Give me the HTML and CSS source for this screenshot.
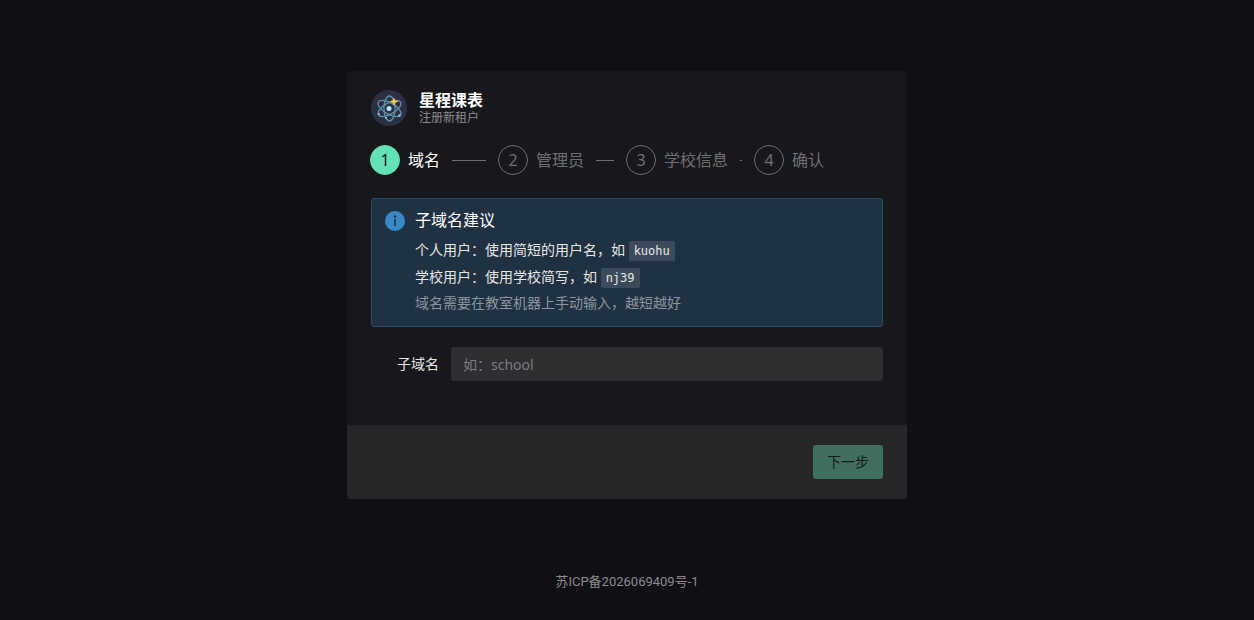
FILE: index.html
```
<!DOCTYPE html>
<html lang="zh-CN">
<head>
	<meta charset="UTF-8">
	<meta name="viewport" content="width=device-width, initial-scale=1.0">
	<title>星程课表 - 注册新租户</title>
	<link rel="stylesheet" href="styles.css">
</head>
<body>
	<main class="page">
		<form class="card">
			<div class="card-body">
				<!-- Logo and title -->
				<header class="brand">
					<svg class="logo" viewBox="0 0 36 36" aria-hidden="true">
						<circle cx="18" cy="18" r="18" fill="#2d3043"/>
						<g fill="none" stroke="#5f93a8" stroke-width="1.3">
							<ellipse cx="18.500" cy="18.500" rx="5.600" ry="12.500"/>
							<ellipse cx="18.500" cy="18.500" rx="5.600" ry="12.800" transform="rotate(60 18.500 18.500)"/>
							<ellipse cx="18.500" cy="18.500" rx="5.600" ry="12.800" transform="rotate(-60 18.500 18.500)"/>
						</g>
						<circle cx="18" cy="18.500" r="2.500" fill="#b5ecff"/>
						<g fill="#8ccbe0">
							<circle cx="8" cy="24" r="1"/>
							<circle cx="28.500" cy="25.500" r="1.200"/>
							<circle cx="15" cy="28" r="0.900"/>
						</g>
						<path d="M23 7.500l1.300 2.700 3.200 1.300-3.200 1.300-1.300 3.200-1.300-3.200-3.200-1.300 3.200-1.300z" fill="#f9c846"/>
					</svg>
					<div>
						<h1>星程课表</h1>
						<p>注册新租户</p>
					</div>
				</header>

				<!-- Registration steps -->
				<ol class="steps">
					<li class="step active"><span class="num">1</span><span class="name">域名</span></li>
					<li class="step"><span class="num">2</span><span class="name">管理员</span></li>
					<li class="step"><span class="num">3</span><span class="name">学校信息</span></li>
					<li class="step"><span class="num">4</span><span class="name">确认</span></li>
				</ol>

				<!-- Domain tips -->
				<section class="tips">
					<svg class="tips-icon" viewBox="0 0 20 20" aria-hidden="true">
						<circle cx="10" cy="10" r="10" fill="#3889c5"/>
						<circle cx="10" cy="5.500" r="1.200" fill="#203242"/>
						<path d="M10 8.500v6" stroke="#203242" stroke-width="1.600" stroke-linecap="round"/>
					</svg>
					<div>
						<h2>子域名建议</h2>
						<p>个人用户：使用简短的用户名，如 <code>kuohu</code></p>
						<p>学校用户：使用学校简写，如 <code>nj39</code></p>
						<p class="note">域名需要在教室机器上手动输入，越短越好</p>
					</div>
				</section>

				<div class="field">
					<label for="subdomain">子域名</label>
					<input type="text" id="subdomain" placeholder="如：school">
				</div>
			</div>
			<div class="card-footer">
				<button type="submit" disabled>下一步</button>
			</div>
		</form>
	</main>
	<footer class="icp"><a href="#">苏ICP备2026069409号-1</a></footer>
</body>
</html>
```
FILE: styles.css
```
* {
	box-sizing: border-box;
}
body {
	margin: 0;
	min-height: 100vh;
	display: flex;
	flex-direction: column;
	background-color: #101014;
	color: #e6e6e6;
	font-family: "Noto Sans", "Noto Sans CJK SC", sans-serif;
	font-size: 14px;
	line-height: 22px;
}
h1, h2, p, ol {
	margin: 0;
	padding: 0;
}
.page {
	flex: 1;
	display: flex;
	align-items: center;
	justify-content: center;
	padding: 24px;
}
/* Card */
.card {
	width: 100%;
	max-width: 560px;
	background-color: #18181c;
	border-radius: 3px;
	overflow: hidden;
}
.card-body {
	padding: 19px 24px 44px;
}
.card-footer {
	display: flex;
	justify-content: flex-end;
	padding: 20px 24px;
	background-color: #262628;
}
.brand {
	display: flex;
	align-items: center;
	gap: 12px;
	margin-bottom: 19px;
}
.logo {
	width: 36px;
	height: 36px;
}
.brand h1 {
	font-size: 16px;
	line-height: 20px;
	font-weight: 700;
	color: #fff;
}
.brand p {
	font-size: 12px;
	line-height: 16px;
	color: #8c8c8e;
}
/* Steps */
.steps {
	display: grid;
	grid-template-columns: repeat(4, 1fr);
	margin: 0 1px 23px -1px;
	list-style: none;
	font-size: 16px;
	color: #6f6f72;
}
.step {
	display: flex;
	align-items: center;
	white-space: nowrap;
}
.num {
	display: flex;
	align-items: center;
	justify-content: center;
	width: 30px;
	height: 30px;
	margin-right: 8px;
	border: 1px solid #6f6f72;
	border-radius: 50%;
}
/* Line to the next step */
.step:not(:last-child)::after {
	content: "";
	flex: 1;
	height: 1px;
	margin: 0 12px;
	background-color: #6f6f72;
}
.step.active {
	color: #fff;
}
.step.active .num {
	background-color: #63e2b7;
	border-color: #63e2b7;
	color: #18181c;
}
/* Tips */
.tips {
	display: flex;
	gap: 10px;
	margin-bottom: 20px;
	padding: 12px 13px 11px;
	background-color: #203242;
	border: 1px solid #27506f;
	border-radius: 3px;
}
.tips-icon {
	flex: none;
	width: 20px;
	height: 20px;
}
.tips h2 {
	margin-bottom: 8px;
	font-size: 16px;
	line-height: 18px;
	font-weight: 400;
	color: #fff;
}
.tips p {
	line-height: 26px;
}
.tips .note {
	line-height: 24px;
	color: #8c959d;
}
.tips code {
	padding: 3px 5px;
	background-color: #3b4b59;
	border-radius: 2px;
	font-family: "DejaVu Sans Mono", monospace;
	font-size: 12px;
}
/* Form */
.field {
	display: flex;
	align-items: center;
}
.field label {
	width: 80px;
	padding-right: 12px;
	text-align: right;
}
.field input {
	flex: 1;
	min-width: 0;
	height: 34px;
	padding: 0 12px;
	background-color: #2f2f32;
	border: none;
	border-radius: 3px;
	color: #e6e6e6;
	font: inherit;
}
.field input::placeholder {
	color: #7c7c7e;
}
button {
	height: 34px;
	padding: 0 14px;
	background-color: #406f60;
	border: none;
	border-radius: 3px;
	color: #121d1b;
	font: inherit;
}
.icp {
	padding: 0 24px 26px;
	text-align: center;
	font-family: Roboto, "Noto Sans CJK SC", sans-serif;
	font-size: 13px;
	line-height: 24px;
}
.icp a {
	color: #8c8c8e;
	text-decoration: none;
}
```
